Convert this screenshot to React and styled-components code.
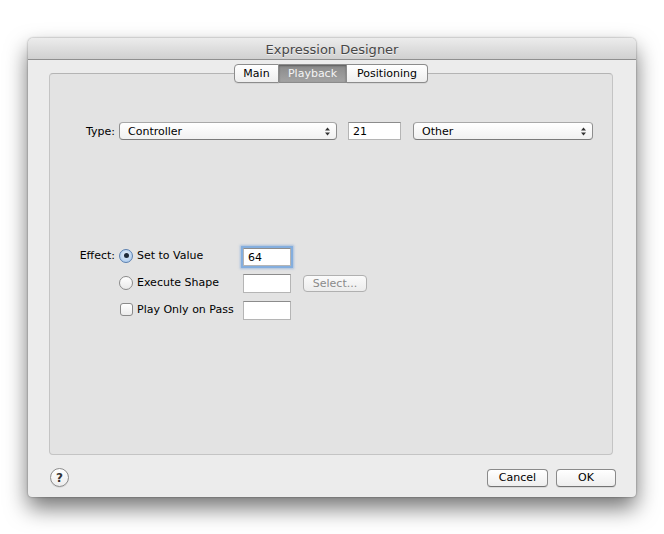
import React from "react";
import styled, { createGlobalStyle } from "styled-components";

const Global = createGlobalStyle`
  html, body { margin: 0; padding: 0; background: #ffffff; }
  body { font-family: "DejaVu Sans", "Liberation Sans", sans-serif; font-size: 11px; color: #000; }
`;

const Page = styled.div`
  width: 664px;
  height: 534px;
  padding: 38px 0 0 28px;
  box-sizing: border-box;
`;

const Window = styled.div`
  width: 608px;
  height: 459px;
  display: flex;
  flex-direction: column;
  background: #ececec;
  border-radius: 5px 5px 4px 4px;
  box-shadow: 0 11px 22px rgba(0, 0, 0, 0.55), 0 0 2px rgba(0, 0, 0, 0.45);
  overflow: hidden;
`;

const TitleBar = styled.div`
  height: 20px;
  flex: none;
  display: flex;
  align-items: center;
  justify-content: center;
  background: linear-gradient(#ececec, #d0d0d0);
  border-bottom: 1px solid #8f8f8f;
  font-size: 13px;
  color: #474747;
  text-shadow: 0 1px 0 rgba(255, 255, 255, 0.6);
  padding-top: 1px;
`;

const Body = styled.div`
  flex: 1;
  display: flex;
  flex-direction: column;
  padding: 4px 23px 0 21px;
  min-height: 0;
`;

const TabStrip = styled.div`
  display: flex;
  justify-content: center;
  margin-bottom: -10px;
  position: relative;
  z-index: 1;
`;

const Tab = styled.div`
  width: ${(p) => p.$w}px;
  height: 19px;
  box-sizing: border-box;
  display: flex;
  align-items: center;
  justify-content: center;
  border: 1px solid #8c8c8c;
  border-left-width: ${(p) => (p.$first ? 1 : 0)}px;
  border-radius: ${(p) => (p.$first ? "4px 0 0 4px" : p.$last ? "0 4px 4px 0" : "0")};
  background: ${(p) =>
    p.$active ? "linear-gradient(#8a8a8a, #a3a3a3)" : "linear-gradient(#ffffff, #eeeeee)"};
  color: ${(p) => (p.$active ? "#f4f4f4" : "#000")};
  box-shadow: ${(p) => (p.$active ? "inset 0 1px 2px rgba(0,0,0,0.35)" : "0 1px 0 rgba(0,0,0,0.06)")};
`;

const TabBox = styled.div`
  flex: 1;
  display: flex;
  flex-direction: column;
  border: 1px solid #c4c4c4;
  border-top-color: #b4b4b4;
  border-radius: 4px;
  background: #e3e3e3;
  padding: 48px 0 0 0;
`;

const TypeRow = styled.div`
  display: flex;
  align-items: center;
  height: 18px;
`;

const Label = styled.div`
  width: 65px;
  text-align: right;
  padding-right: 4px;
  flex: none;
`;

const Popup = styled.div`
  width: ${(p) => p.$w}px;
  height: 18px;
  box-sizing: border-box;
  display: flex;
  align-items: center;
  justify-content: space-between;
  padding: 0 6px 0 8px;
  border: 1px solid #8e8e8e;
  border-top-color: #a8a8a8;
  border-bottom-color: #7a7a7a;
  border-radius: 4px;
  background: linear-gradient(#ffffff, #f1f1f1);
  margin-left: ${(p) => p.$ml || 0}px;
  flex: none;
`;

const TextField = styled.div`
  width: ${(p) => p.$w}px;
  height: ${(p) => p.$h || 18}px;
  box-sizing: border-box;
  margin-left: ${(p) => p.$ml || 0}px;
  background: #fff;
  border: 1px solid #b5b5b5;
  border-top-color: #8c8c8c;
  padding: 1px 0 0 4px;
  display: flex;
  align-items: center;
  flex: none;
  box-shadow: ${(p) =>
    p.$focus ? "0 0 0 2px #84aede, 0 0 2px 3px rgba(110,155,215,0.5)" : "none"};
`;

const EffectGrid = styled.div`
  margin-top: 107px;
  display: grid;
  grid-template-columns: 69px 124px 48px auto;
  grid-auto-rows: 19px;
  row-gap: 8px;
  align-items: center;
  line-height: 13px;
`;

const Choice = styled.div`
  display: flex;
  align-items: center;
  gap: 4px;
  margin-top: -2px;
`;

const Radio = styled.div`
  width: 14px;
  height: 14px;
  box-sizing: border-box;
  border-radius: 50%;
  border: 1px solid #7f7f7f;
  background: ${(p) =>
    p.$on ? "radial-gradient(circle at 50% 40%, #e6f0fb, #9fc2ea)" : "linear-gradient(#ffffff, #e9e9e9)"};
  border-color: ${(p) => (p.$on ? "#5a7faf" : "#8a8a8a")};
  display: flex;
  align-items: center;
  justify-content: center;
  &::after {
    content: "";
    display: ${(p) => (p.$on ? "block" : "none")};
    width: 5px;
    height: 5px;
    border-radius: 50%;
    background: #1d2a3a;
  }
`;

const Check = styled.div`
  width: 13px;
  height: 13px;
  box-sizing: border-box;
  border-radius: 3px;
  border: 1px solid #8a8a8a;
  background: linear-gradient(#ffffff, #ebebeb);
  margin-left: 1px;
`;

const SmallButton = styled.div`
  width: 64px;
  height: 17px;
  box-sizing: border-box;
  margin-left: 12px;
  border: 1px solid #b0b0b0;
  border-radius: 4px;
  background: linear-gradient(#fbfbfb, #ececec);
  color: #8a8a8a;
  display: flex;
  align-items: center;
  justify-content: center;
`;

const EffectLabel = styled(Label)`
  margin-top: -2px;
`;

const Footer = styled.div`
  flex: none;
  height: 19px;
  margin: 13px -3px 10px 1px;
  display: flex;
  align-items: center;
  justify-content: space-between;
`;

const Help = styled.div`
  width: 19px;
  height: 19px;
  box-sizing: border-box;
  border-radius: 50%;
  border: 1px solid #8c8c8c;
  background: linear-gradient(#ffffff, #ededed);
  box-shadow: 0 1px 0 rgba(0, 0, 0, 0.08);
  display: flex;
  align-items: center;
  justify-content: center;
  font-weight: bold;
  font-size: 12px;
  color: #333;
`;

const Buttons = styled.div`
  display: flex;
  gap: 8px;
`;

const Button = styled.div`
  width: ${(p) => p.$w}px;
  height: 18px;
  box-sizing: border-box;
  border: 1px solid #8a8a8a;
  border-bottom-color: #737373;
  border-radius: 4px;
  background: linear-gradient(#ffffff, #eeeeee);
  box-shadow: 0 1px 0 rgba(0, 0, 0, 0.08);
  display: flex;
  align-items: center;
  justify-content: center;
`;

const Arrows = () => (
  <svg width="5" height="9" viewBox="0 0 5 9">
    <path d="M2.5 0.5 L5 3.5 L0 3.5 Z" fill="#333" />
    <path d="M2.5 8.5 L5 5.5 L0 5.5 Z" fill="#333" />
  </svg>
);

export default function App() {
  return (
    <>
      <Global />
      <Page>
        <Window>
          <TitleBar>Expression Designer</TitleBar>
          <Body>
            <TabStrip>
              <Tab $w={45} $first>Main</Tab>
              <Tab $w={68} $active>Playback</Tab>
              <Tab $w={81} $last>Positioning</Tab>
            </TabStrip>
            <TabBox>
              <TypeRow>
                <Label>Type:</Label>
                <Popup $w={218}>
                  <span>Controller</span>
                  <Arrows />
                </Popup>
                <TextField $w={53} $ml={11}>21</TextField>
                <Popup $w={180} $ml={12}>
                  <span>Other</span>
                  <Arrows />
                </Popup>
              </TypeRow>
              <EffectGrid>
                <EffectLabel>Effect:</EffectLabel>
                <Choice>
                  <Radio $on />
                  <span>Set to Value</span>
                </Choice>
                <TextField $w={48} $focus>64</TextField>
                <span />

                <span />
                <Choice>
                  <Radio />
                  <span>Execute Shape</span>
                </Choice>
                <TextField $w={48} $h={19} />
                <SmallButton>Select...</SmallButton>

                <span />
                <Choice>
                  <Check />
                  <span>Play Only on Pass</span>
                </Choice>
                <TextField $w={48} $h={19} />
                <span />
              </EffectGrid>
            </TabBox>
            <Footer>
              <Help>?</Help>
              <Buttons>
                <Button $w={61}>Cancel</Button>
                <Button $w={60}>OK</Button>
              </Buttons>
            </Footer>
          </Body>
        </Window>
      </Page>
    </>
  );
}
